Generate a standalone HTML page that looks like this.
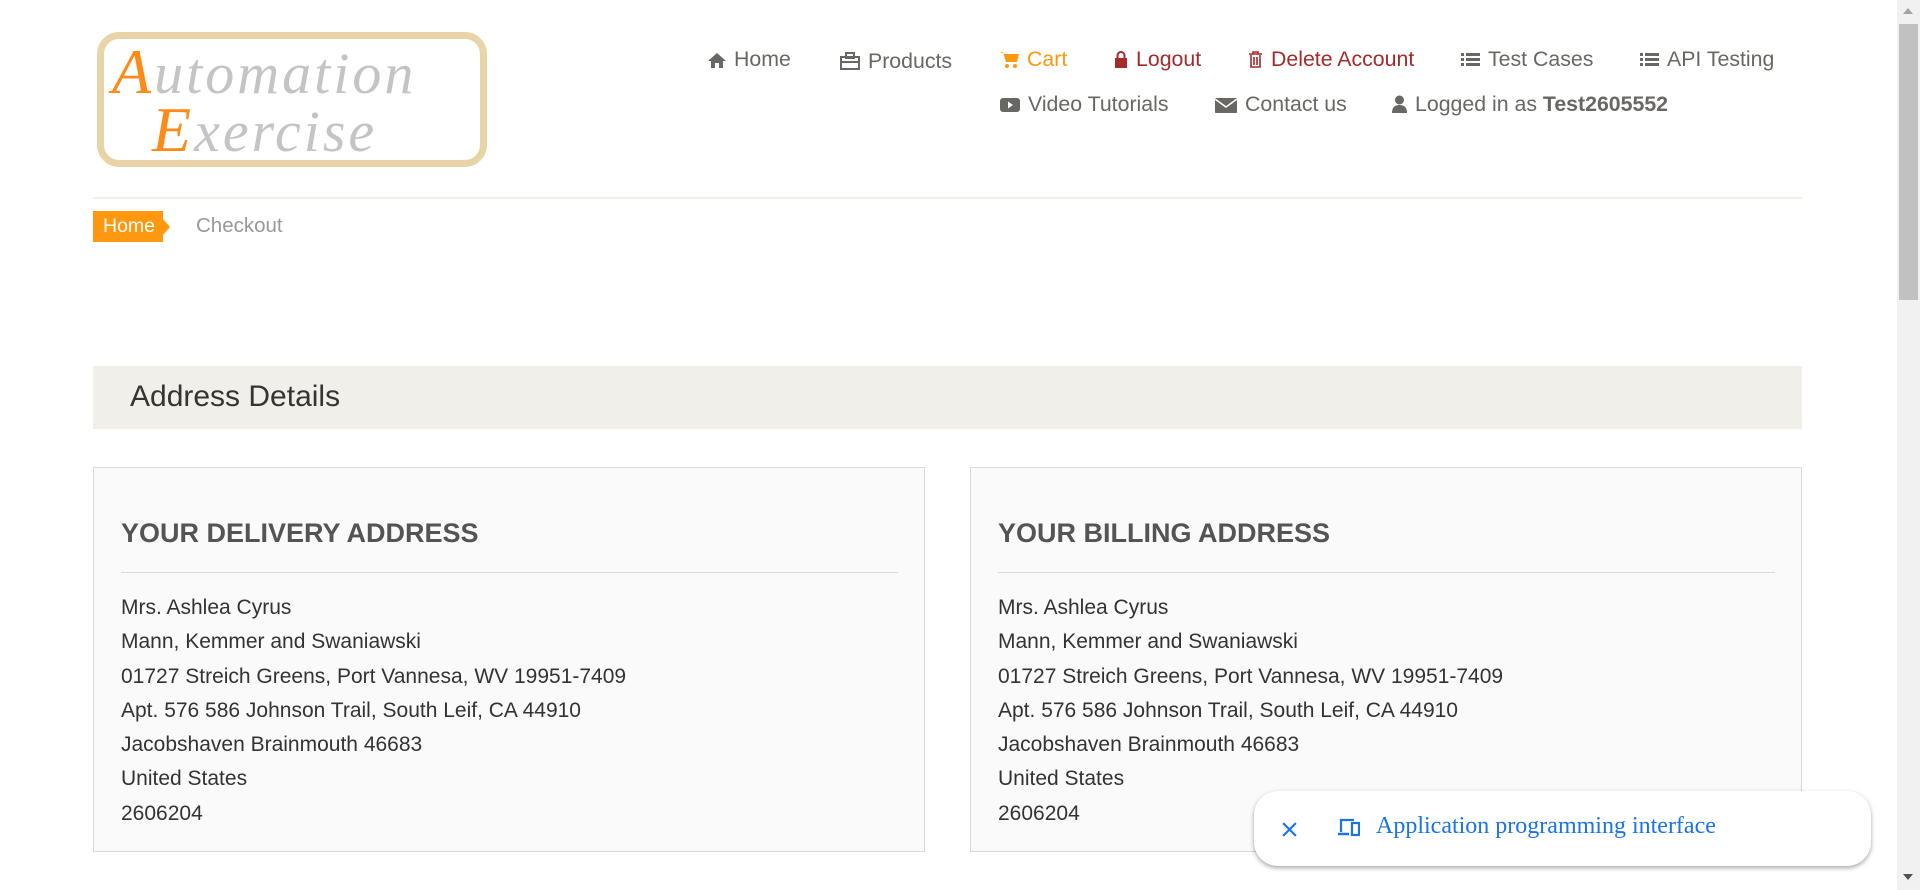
<!DOCTYPE html>
<html><head><meta charset="utf-8"><style>
*{margin:0;padding:0;box-sizing:border-box}
body{width:1920px;height:890px;overflow:hidden;background:#fff;font-family:"Liberation Sans",Arial,sans-serif;position:relative;color:#333}
.abs{position:absolute}
.logo{left:97px;top:32px;width:390px;height:135px;border:7px solid #e8d4a6;border-radius:22px;background:#fff}
.logo span{position:absolute;font-family:"Liberation Serif",serif;font-style:italic;font-size:58px;color:#c4c4c4;letter-spacing:3px}
.logo b{color:#fe8a1a;font-weight:normal;font-size:64px}
.nav{font-size:21.3px;color:#696763;white-space:nowrap}
.nav svg{vertical-align:-2px;margin-right:8px}
.hr{background:#f0f0e9;height:2px}
.addr{border:1px solid #d9d9d9;background:#fafafa;width:832px;height:385px}
.addr h3{position:absolute;left:27px;top:50px;font-size:27px;font-weight:bold;color:#545454}
.addr .line{position:absolute;left:27px;top:104px;width:777px;height:1px;background:#d9d9d9}
.addr .txt{position:absolute;left:27px;top:123px;font-size:21px;line-height:34.3px;color:#333}
</style></head><body>
<div class="abs logo"><span style="left:8px;top:-4px"><b>A</b>utomation</span><span style="left:48px;top:54px"><b>E</b>xercise</span></div>

<div class="abs nav" style="left:708px;top:47px"><svg width="18" height="16" viewBox="0 0 18 16"><path d="M9 1L0 9h3v7h4v-5h4v5h4V9h3z" fill="#696763"/></svg>Home</div>
<div class="abs nav" style="left:840px;top:49px"><svg width="20" height="18" viewBox="0 0 20 18"><rect x="1" y="5" width="18" height="12" fill="none" stroke="#696763" stroke-width="2"/><rect x="6" y="1" width="8" height="5" fill="none" stroke="#696763" stroke-width="2"/><line x1="1" y1="10" x2="19" y2="10" stroke="#696763" stroke-width="2"/></svg>Products</div>
<div class="abs nav" style="left:1000px;top:47px;color:#fe980f"><svg width="19" height="17" viewBox="0 0 19 17"><path d="M0 1h3l3 10h11l2-8H5" fill="#fe980f"/><circle cx="7" cy="15" r="2" fill="#fe980f"/><circle cx="15" cy="15" r="2" fill="#fe980f"/></svg>Cart</div>
<div class="abs nav" style="left:1114px;top:47px;color:#a52a2a"><svg width="14" height="17" viewBox="0 0 14 17"><rect x="1" y="7" width="12" height="10" fill="#a52a2a"/><path d="M3.5 7V4.5a3.5 3.5 0 017 0V7" fill="none" stroke="#a52a2a" stroke-width="2"/></svg>Logout</div>
<div class="abs nav" style="left:1248px;top:47px;color:#a52a2a"><svg width="15" height="17" viewBox="0 0 15 17"><path d="M1 3h13M5 3V1h5v2M3 4v12h9V4M6 6v8M9 6v8" fill="none" stroke="#a52a2a" stroke-width="1.6"/></svg>Delete Account</div>
<div class="abs nav" style="left:1461px;top:47px"><svg width="19" height="16" viewBox="0 0 19 16"><path d="M0 1h3v3H0zM5 1h14v3H5zM0 6h3v3H0zM5 6h14v3H5zM0 11h3v3H0zM5 11h14v3H5z" fill="#696763"/></svg>Test Cases</div>
<div class="abs nav" style="left:1640px;top:47px"><svg width="19" height="16" viewBox="0 0 19 16"><path d="M0 1h3v3H0zM5 1h14v3H5zM0 6h3v3H0zM5 6h14v3H5zM0 11h3v3H0zM5 11h14v3H5z" fill="#696763"/></svg>API Testing</div>
<div class="abs nav" style="left:1000px;top:92px"><svg width="20" height="16" viewBox="0 0 20 16"><rect x="0" y="1" width="20" height="14" rx="3" fill="#696763"/><path d="M8 4.5l5 3.5-5 3.5z" fill="#fff"/></svg>Video Tutorials</div>
<div class="abs nav" style="left:1215px;top:92px"><svg width="22" height="16" viewBox="0 0 22 16"><rect x="0" y="1" width="22" height="15" rx="1" fill="#696763"/><path d="M0 2l11 8 11-8" fill="none" stroke="#fff" stroke-width="1.6"/></svg>Contact us</div>
<div class="abs nav" style="left:1392px;top:92px"><svg width="15" height="18" viewBox="0 0 15 18"><circle cx="7.5" cy="5" r="4.5" fill="#696763"/><path d="M0 18c0-6 3-8 7.5-8s7.5 2 7.5 8z" fill="#696763"/></svg>Logged in as <b>Test2605552</b></div>

<div class="abs hr" style="left:93px;top:197px;width:1709px"></div>
<div class="abs" style="left:93px;top:211px;width:70px;height:31px;background:#fe980f;color:#fff;font-size:19.5px;line-height:31px;padding-left:10px">Home</div>
<div class="abs" style="left:163px;top:219px;width:0;height:0;border-left:7px solid #fe980f;border-top:8px solid transparent;border-bottom:8px solid transparent"></div>
<div class="abs" style="left:196px;top:214px;font-size:20.5px;color:#999">Checkout</div>

<div class="abs" style="left:93px;top:366px;width:1709px;height:63px;background:#f0efe9"></div>
<div class="abs" style="left:130px;top:380px;font-size:30px;color:#363432">Address Details</div>

<div class="abs addr" style="left:93px;top:467px"><h3>YOUR DELIVERY ADDRESS</h3><div class="line"></div><div class="txt">Mrs. Ashlea Cyrus<br>Mann, Kemmer and Swaniawski<br>01727 Streich Greens, Port Vannesa, WV 19951-7409<br>Apt. 576 586 Johnson Trail, South Leif, CA 44910<br>Jacobshaven Brainmouth 46683<br>United States<br>2606204</div></div>
<div class="abs addr" style="left:970px;top:467px"><h3>YOUR BILLING ADDRESS</h3><div class="line"></div><div class="txt">Mrs. Ashlea Cyrus<br>Mann, Kemmer and Swaniawski<br>01727 Streich Greens, Port Vannesa, WV 19951-7409<br>Apt. 576 586 Johnson Trail, South Leif, CA 44910<br>Jacobshaven Brainmouth 46683<br>United States<br>2606204</div></div>

<div class="abs" style="left:1254px;top:791px;width:617px;height:75px;background:#fff;border-radius:24px;box-shadow:0 2px 5px rgba(0,0,0,.35)">
<svg class="abs" style="left:27px;top:30px" width="17" height="17" viewBox="0 0 16 16"><path d="M2 2l12 12M14 2L2 14" stroke="#1a73e8" stroke-width="2"/></svg>
<svg class="abs" style="left:84px;top:27px" width="22" height="20" viewBox="0 0 22 20"><path d="M3 14V2h13" fill="none" stroke="#1a73e8" stroke-width="2.2"/><path d="M0 16h11" stroke="#1a73e8" stroke-width="2.5"/><rect x="14" y="5" width="7" height="12" fill="none" stroke="#1a73e8" stroke-width="2.2"/></svg>
<div class="abs" style="left:122px;top:22px;font-family:'Liberation Serif',serif;font-size:24px;color:#1a73e8;white-space:nowrap">Application programming interface</div>
</div>

<div class="abs" style="left:1897px;top:0;width:23px;height:890px;background:#f1f1f1"></div>
<div class="abs" style="left:1899px;top:24px;width:19px;height:276px;background:#c1c1c1"></div>
<div class="abs" style="left:1903px;top:8px;border-left:5px solid transparent;border-right:5px solid transparent;border-bottom:6px solid #a3a3a3"></div>
<div class="abs" style="left:1903px;top:874px;border-left:5px solid transparent;border-right:5px solid transparent;border-top:6px solid #505050"></div>
</body></html>
